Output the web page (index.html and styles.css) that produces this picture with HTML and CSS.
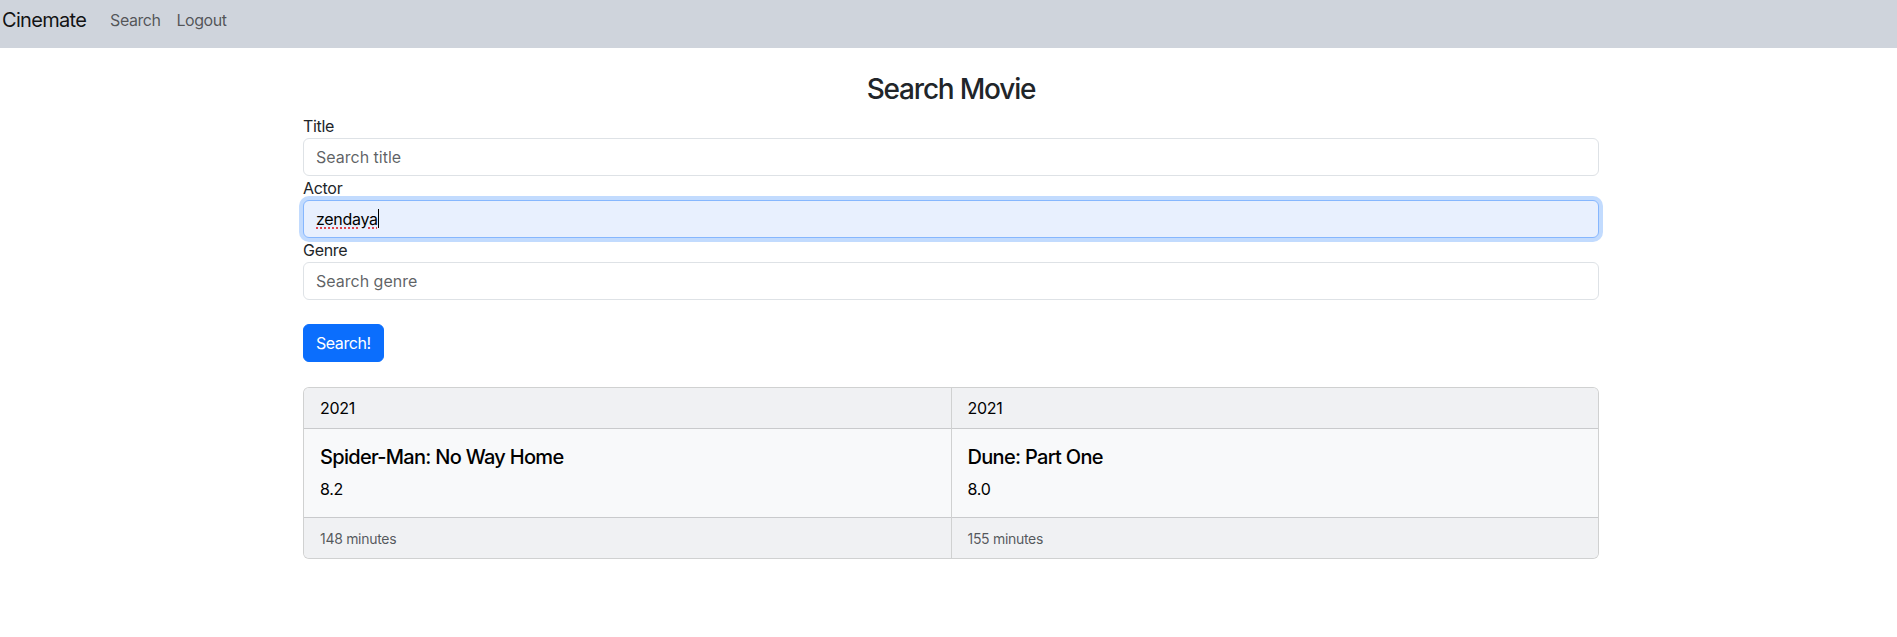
FILE: index.html
```html
<!DOCTYPE html>
<html lang="en">
<head>
<meta charset="utf-8">
<title>Cinemate</title>
<link rel="stylesheet" href="styles.css">
</head>
<body>
<nav class="navbar">
  <a class="brand" href="#">Cinemate</a>
  <ul class="nav">
    <li><a class="nav-link" href="#">Search</a></li>
    <li><a class="nav-link" href="#">Logout</a></li>
  </ul>
</nav>
<main class="page">
  <div class="container">
    <h3 class="title">Search Movie</h3>
    <form class="form">
      <label class="label" for="t">Title</label>
      <input class="control" id="t" type="text" placeholder="Search title">
      <label class="label" for="a">Actor</label>
      <div class="control focused"><span class="typed">zendaya</span><span class="caret"></span></div>
      <label class="label" for="g">Genre</label>
      <input class="control" id="g" type="text" placeholder="Search genre">
      <div class="actions"><button class="btn" type="button">Search!</button></div>
    </form>
    <div class="card-group">
      <div class="card">
        <div class="card-header">2021</div>
        <div class="card-body">
          <h5 class="card-title">Spider-Man: No Way Home</h5>
          <p class="card-text">8.2</p>
        </div>
        <div class="card-footer">148 minutes</div>
      </div>
      <div class="card">
        <div class="card-header">2021</div>
        <div class="card-body">
          <h5 class="card-title">Dune: Part One</h5>
          <p class="card-text">8.0</p>
        </div>
        <div class="card-footer">155 minutes</div>
      </div>
    </div>
  </div>
</main>
</body>
</html>
```

FILE: styles.css
```css
* { box-sizing: border-box; }
html, body { margin: 0; padding: 0; }
body {
  font-family: "Inter", "Liberation Sans", sans-serif;
  font-size: 16px;
  line-height: 1.5;
  color: #212529;
  background: #fff;
  letter-spacing: -0.3px;
}
a { text-decoration: none; }

.navbar {
  display: flex;
  align-items: center;
  height: 48px;
  padding: 0 0 8px 2px;
  background: #cfd4dc;
}
.brand {
  font-size: 20px;
  line-height: 30px;
  padding: 5px 0;
  margin-right: 16px;
  color: rgba(0,0,0,0.92);
  letter-spacing: -0.7px;
}
.nav { display: flex; list-style: none; margin: 0; padding: 0; }
.nav-link {
  display: block;
  padding: 8px;
  color: rgba(0,0,0,0.62);
  line-height: 24px;
  letter-spacing: -0.45px;
}

.page { padding-left: 5px; }
.container {
  max-width: 1296px;
  margin: 0 auto;
}
.title {
  margin: 25px 0 7px;
  text-align: center;
  font-size: 28px;
  font-weight: 500;
  line-height: 1.2;
  letter-spacing: -1.2px;
}
.form { display: flex; flex-direction: column; }
.label { display: block; line-height: 24px; }
.control {
  display: block;
  width: 100%;
  height: 38px;
  padding: 6px 12px;
  font: inherit;
  line-height: 24px;
  color: #212529;
  background: #fff;
  border: 1px solid #dee2e6;
  border-radius: 6px;
  outline: none;
}
.control::placeholder { color: rgba(33,37,41,0.72); }
.focused {
  background: #e8f0fe;
  border-color: #86b7fe;
  box-shadow: 0 0 0 4px rgba(13,110,253,0.25);
  display: flex;
  align-items: center;
  color: #000;
}
.typed {
  text-decoration: underline dotted #e0454d;
  text-underline-offset: 3px;
  text-decoration-thickness: 1.5px;
}
.caret {
  display: inline-block;
  width: 1px;
  height: 19px;
  background: #000;
}
.actions { margin-top: 24px; }
.btn {
  font: inherit;
  line-height: 24px;
  padding: 6px 12px;
  color: #fff;
  background: #0b6efd;
  border: 1px solid #0b6efd;
  border-radius: 6px;
  letter-spacing: -0.45px;
}

.card-group {
  display: flex;
  margin-top: 25px;
}
.card {
  flex: 1 1 0;
  display: flex;
  flex-direction: column;
  background: #f8f9fa;
  border: 1px solid rgba(0,0,0,0.16);
}
.card:first-child { border-radius: 6px 0 0 6px; }
.card + .card { border-left: 0; border-radius: 0 6px 6px 0; }
.card-header {
  padding: 8px 16px;
  line-height: 24px;
  background: #f0f1f3;
  border-bottom: 1px solid rgba(0,0,0,0.16);
  color: #000;
}
.card:first-child .card-header { border-top-left-radius: 5px; }
.card + .card .card-header { border-top-right-radius: 5px; }
.card-body { padding: 16px; flex: 1 1 auto; color: #000; }
.card-title {
  margin: 0 0 8px;
  font-size: 20px;
  font-weight: 500;
  line-height: 24px;
  letter-spacing: -0.7px;
}
.card-text { margin: 0; line-height: 24px; }
.card-footer {
  padding: 9px 16px 7px;
  line-height: 24px;
  font-size: 14px;
  color: rgba(33,37,41,0.75);
  background: #f0f1f3;
  border-top: 1px solid rgba(0,0,0,0.16);
}
.card:first-child .card-footer { border-bottom-left-radius: 5px; }
.card + .card .card-footer { border-bottom-right-radius: 5px; }
```
